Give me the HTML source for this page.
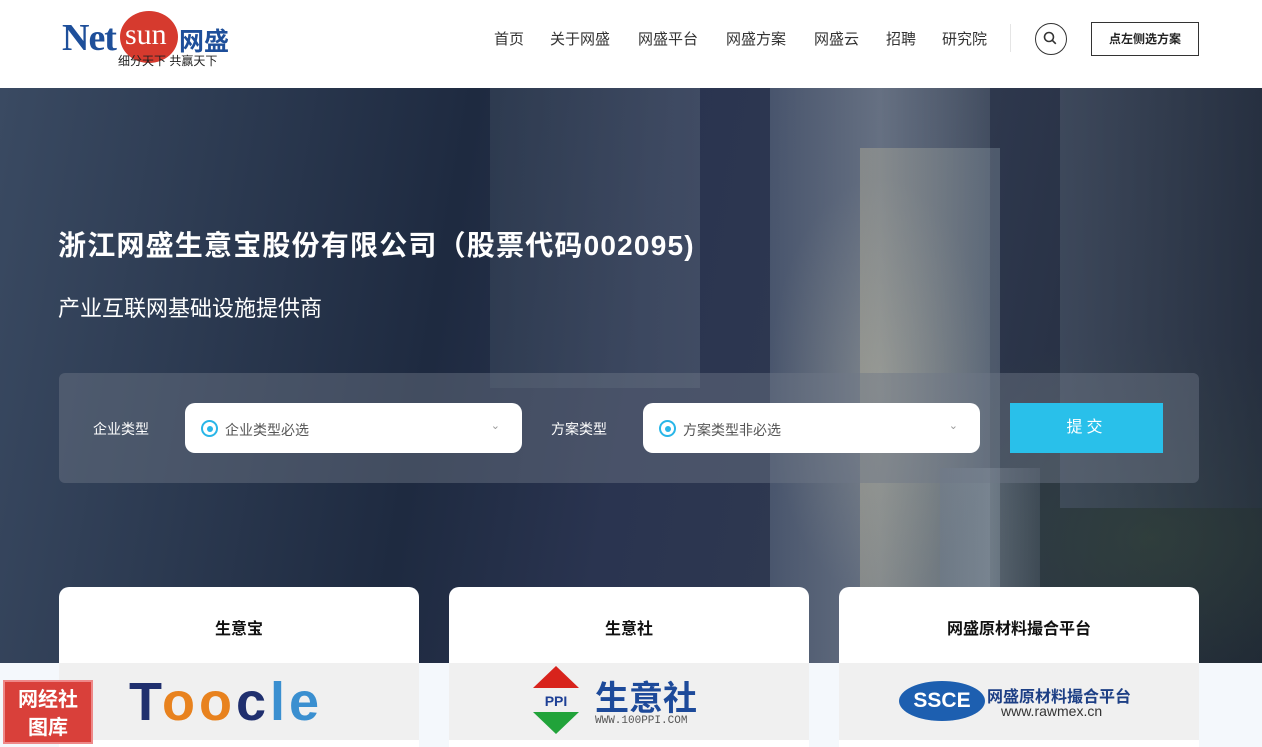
<!DOCTYPE html><html><head><meta charset="utf-8"><style>
*{margin:0;padding:0;box-sizing:border-box}
body{width:1262px;height:745px;overflow:hidden;font-family:"Liberation Sans","Noto Sans CJK SC",sans-serif;background:#f4f8fc;position:relative}
.hdr{position:absolute;top:0;left:0;width:1262px;height:88px;background:#fff}
.nav{position:absolute;top:28px;font-size:15px;color:#333}
.hero{position:absolute;top:88px;left:0;width:1262px;height:575px;background:
radial-gradient(ellipse 160px 300px at 880px 300px,rgba(200,190,150,.3),transparent 70%),
radial-gradient(ellipse 300px 200px at 1150px 450px,rgba(60,80,60,.5),transparent),
linear-gradient(100deg,#3a4a62 0%,#1e2a40 35%,#2a3450 50%,#303a50 70%,#1c2434 100%)}
.tower{position:absolute;background:linear-gradient(90deg,#6b7a90,#a9b4bf 50%,#5c6878)}
.abs{position:absolute}
.sel{position:absolute;top:403px;height:50px;background:#fff;border-radius:10px;font-size:14px;color:#555;padding:17px 0 0 40px}
.sel i{position:absolute;left:16px;top:17px;width:17px;height:17px;border:2px solid #29b6e8;border-radius:50%}
.sel i:after{content:"";position:absolute;left:3.5px;top:3.5px;width:6px;height:6px;background:#29b6e8;border-radius:50%}
.sel b{position:absolute;right:22px;top:16px;font-weight:normal;color:#999;font-size:11px}
.card{position:absolute;top:587px;width:360px;height:160px;background:#fff;border-radius:10px 10px 0 0;text-align:center;font-size:16px;font-weight:bold;color:#111;padding-top:28px}
.logo{position:absolute;top:663px;width:360px;height:77px;background:#f0f0f0}
</style></head><body>
<div class="hdr">
<div class="abs" style="left:120px;top:11px;width:58px;height:52px;border-radius:50%;background:#d63a2e"></div>
<div class="abs" style="left:62px;top:16px;font-family:'Liberation Serif',serif;font-weight:bold;font-size:38px;color:#1e4f9a;letter-spacing:-1px">Net</div>
<div class="abs" style="left:125px;top:18px;font-family:'Liberation Serif',serif;font-size:30px;color:#fff">sun</div>
<div class="abs" style="left:179px;top:22px;font-size:25px;font-weight:bold;color:#1e4f9a">网盛</div>
<div class="abs" style="left:118px;top:52px;font-size:12px;color:#222">细分天下 共赢天下</div>
<div class="nav" style="left:494px">首页</div>
<div class="nav" style="left:550px">关于网盛</div>
<div class="nav" style="left:638px">网盛平台</div>
<div class="nav" style="left:726px">网盛方案</div>
<div class="nav" style="left:814px">网盛云</div>
<div class="nav" style="left:886px">招聘</div>
<div class="nav" style="left:942px">研究院</div>
<div class="abs" style="left:1010px;top:24px;width:1px;height:28px;background:#e5e5e5"></div>
<div class="abs" style="left:1035px;top:23px;width:32px;height:32px;border:1.5px solid #333;border-radius:50%"><svg width="29" height="29" viewBox="0 0 29 29"><circle cx="13" cy="13" r="4.5" fill="none" stroke="#333" stroke-width="1.6"/><path d="M16.3 16.3l3.5 3.5" stroke="#333" stroke-width="1.6"/></svg></div>
<div class="abs" style="left:1091px;top:22px;width:108px;height:34px;border:1px solid #333;font-size:12px;font-weight:bold;color:#222;text-align:center;line-height:32px">点左侧选方案</div>
</div>
<div class="hero">
<div class="tower" style="left:770px;top:0;width:220px;height:575px;opacity:.45"></div>
<div class="tower" style="left:860px;top:60px;width:140px;height:515px;opacity:.35;background:linear-gradient(90deg,#c9c0a0,#8a9aa8)"></div>
<div class="tower" style="left:940px;top:380px;width:100px;height:195px;opacity:.35"></div>
<div class="abs" style="left:1060px;top:0;width:202px;height:420px;background:linear-gradient(90deg,#4a5668,#2a3444);opacity:.6"></div>
<div class="abs" style="left:490px;top:0;width:210px;height:300px;background:linear-gradient(90deg,#3c4a5e,#556276);opacity:.5"></div>
</div>
<div class="abs" style="left:58px;top:224px;font-size:28px;font-weight:bold;color:#fff;letter-spacing:1.2px">浙江网盛生意宝股份有限公司（股票代码002095)</div>
<div class="abs" style="left:58px;top:291px;font-size:22px;color:#fff">产业互联网基础设施提供商</div>
<div class="abs" style="left:59px;top:373px;width:1140px;height:110px;background:rgba(110,120,135,.45);border-radius:6px"></div>
<div class="abs" style="left:93px;top:419px;font-size:14px;color:#fff">企业类型</div>
<div class="sel" style="left:185px;width:337px"><i></i>企业类型必选<b>⌄</b></div>
<div class="abs" style="left:551px;top:419px;font-size:14px;color:#fff">方案类型</div>
<div class="sel" style="left:643px;width:337px"><i></i>方案类型非必选<b>⌄</b></div>
<div class="abs" style="left:1010px;top:403px;width:153px;height:50px;background:#29c0ea;color:#fff;font-size:16px;text-align:center;line-height:50px;letter-spacing:4px">提交</div>
<div class="card" style="left:59px">生意宝</div>
<div class="card" style="left:449px">生意社</div>
<div class="card" style="left:839px">网盛原材料撮合平台</div>
<div class="logo" style="left:59px"><div class="abs" style="left:70px;top:8px;font-size:54px;font-weight:bold;color:#1f2f6e;letter-spacing:4px">T<span style="color:#e8821e">oo</span>c<span style="color:#3a8fd0">le</span></div></div>
<div class="logo" style="left:449px">
<svg class="abs" style="left:84px;top:3px" width="46" height="68"><polygon points="23,0 46,22 0,22" fill="#d8231c"/><text x="23" y="40" font-size="14" font-weight="bold" fill="#1d3f95" text-anchor="middle" font-family="Liberation Sans">PPI</text><polygon points="0,46 46,46 23,68" fill="#21a33a"/></svg>
<div class="abs" style="left:146px;top:8px;font-size:34px;font-weight:bold;color:#1d4a9a">生意社</div>
<div class="abs" style="left:146px;top:52px;font-size:11px;color:#555;font-family:'Liberation Mono',monospace">WWW.100PPI.COM</div></div>
<div class="logo" style="left:839px">
<div class="abs" style="left:60px;top:18px;width:86px;height:40px;border-radius:50%;background:#1d5fb0;color:#fff;font-weight:bold;font-size:21px;text-align:center;line-height:40px">SSCE</div>
<div class="abs" style="left:148px;top:20px;font-size:16px;font-weight:bold;color:#1d3f85">网盛原材料撮合平台</div>
<div class="abs" style="left:162px;top:40px;font-size:14px;color:#333">www.rawmex.cn</div></div>
<div class="abs" style="left:3px;top:680px;width:90px;height:64px;background:#d9403a;border:2px solid #e88;color:#fff;font-size:20px;font-weight:bold;text-align:center;line-height:28px;padding-top:4px">网经社<br>图库</div>
</body></html>
